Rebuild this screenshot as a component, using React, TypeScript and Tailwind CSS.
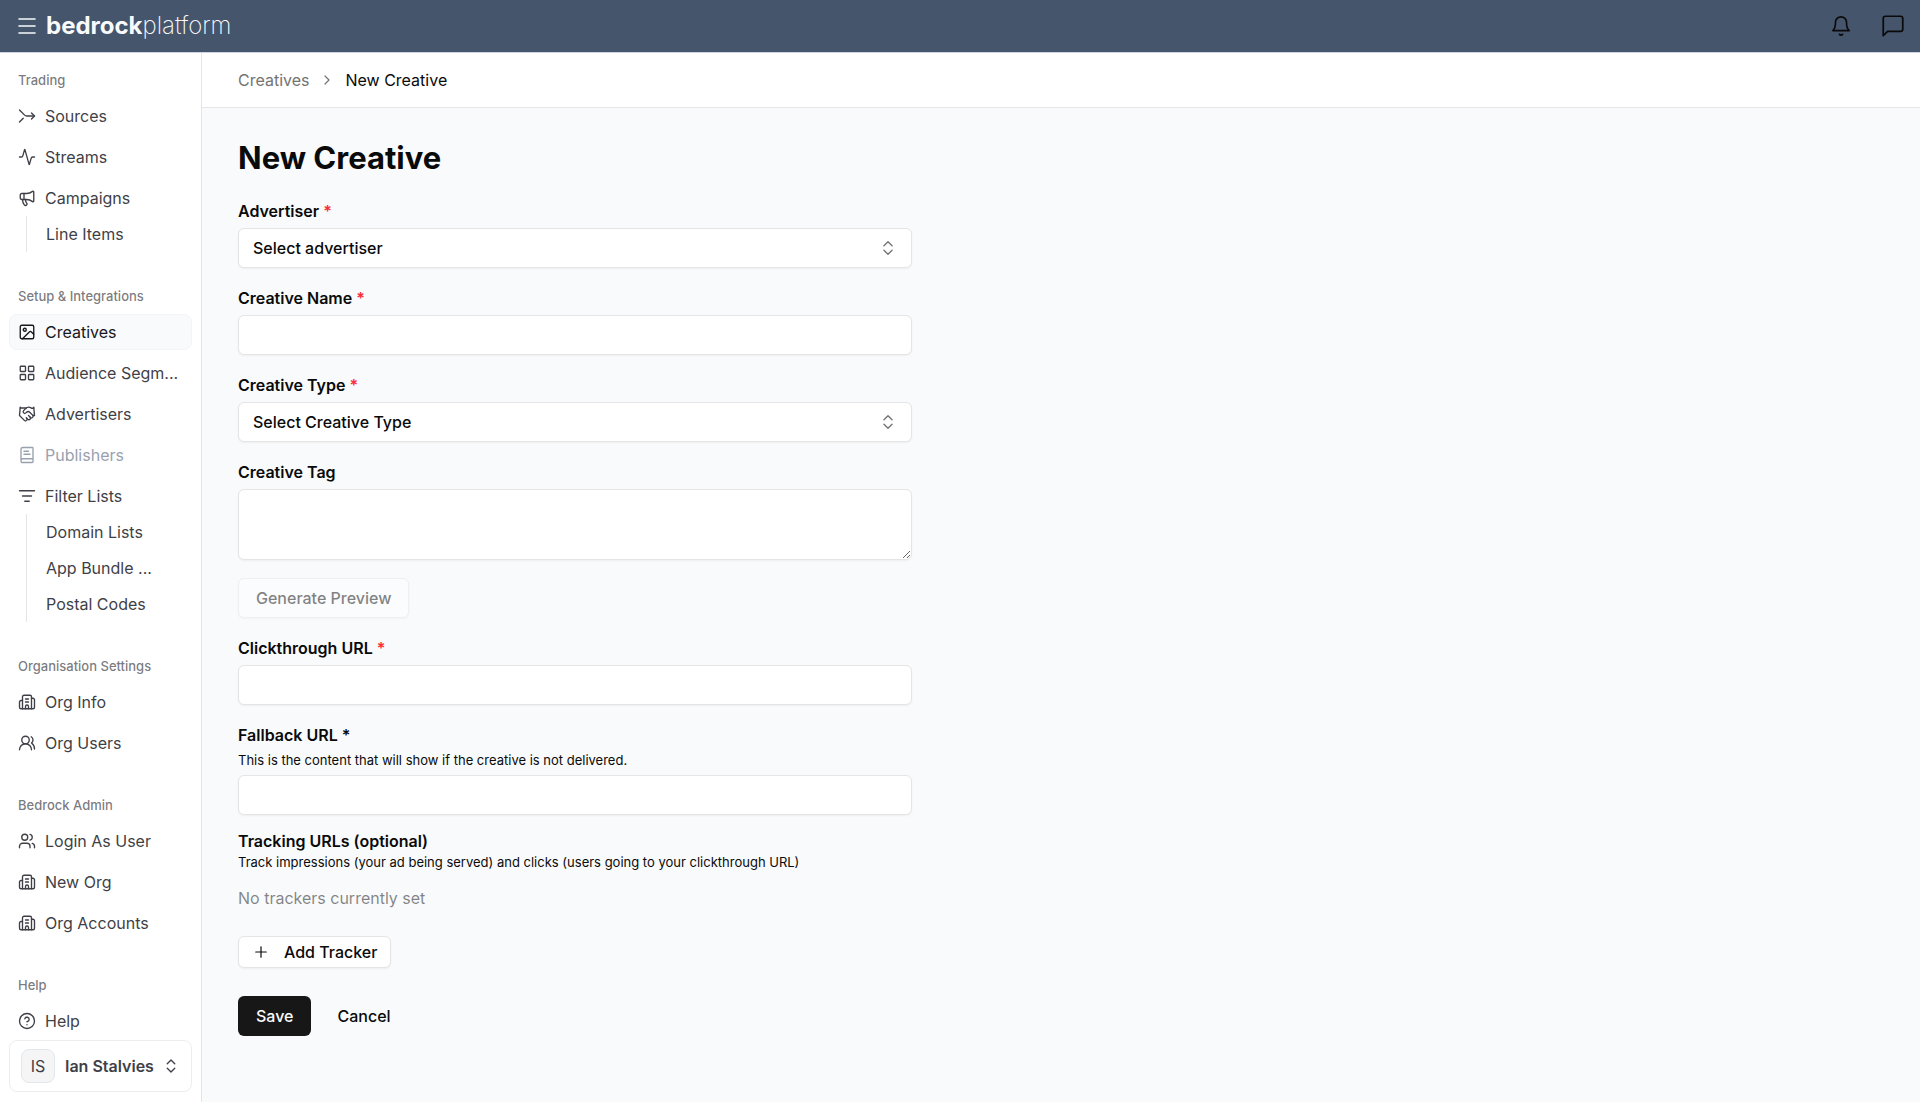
import type { ReactNode } from 'react';
import {
  Activity,
  BookText,
  Building2,
  ChevronRight,
  ChevronsUpDown,
  CircleQuestionMark,
  Handshake,
  Image,
  LayoutGrid,
  ListFilter,
  Megaphone,
  Menu,
  Merge,
  Plus,
  Users,
  UsersRound,
  type LucideIcon,
} from 'lucide-react';

type NavItem = {
  title: string;
  icon: LucideIcon;
  iconClass?: string;
  active?: boolean;
  disabled?: boolean;
  children?: string[];
};

const navGroups: { label: string; items: NavItem[] }[] = [
  {
    label: 'Trading',
    items: [
      { title: 'Sources', icon: Merge, iconClass: 'rotate-90' },
      { title: 'Streams', icon: Activity },
      { title: 'Campaigns', icon: Megaphone, children: ['Line Items'] },
    ],
  },
  {
    label: 'Setup & Integrations',
    items: [
      { title: 'Creatives', icon: Image, active: true },
      { title: 'Audience Segm...', icon: LayoutGrid },
      { title: 'Advertisers', icon: Handshake },
      { title: 'Publishers', icon: BookText, disabled: true },
      {
        title: 'Filter Lists',
        icon: ListFilter,
        children: ['Domain Lists', 'App Bundle ...', 'Postal Codes'],
      },
    ],
  },
  {
    label: 'Organisation Settings',
    items: [
      { title: 'Org Info', icon: Building2 },
      { title: 'Org Users', icon: UsersRound },
    ],
  },
  {
    label: 'Bedrock Admin',
    items: [
      { title: 'Login As User', icon: Users },
      { title: 'New Org', icon: Building2 },
      { title: 'Org Accounts', icon: Building2 },
    ],
  },
  {
    label: 'Help',
    items: [{ title: 'Help', icon: CircleQuestionMark }],
  },
];

function BellIcon() {
  return (
    <svg viewBox="0 0 24 24" className="size-[22px]" fill="none" stroke="currentColor" strokeWidth="1.8" strokeLinecap="round" strokeLinejoin="round">
      <path d="M6 8a6 6 0 0 1 12 0c0 7 3 9 3 9H3s3-2 3-9" />
      <path d="M10.3 21a1.94 1.94 0 0 0 3.4 0" />
    </svg>
  );
}

function MessageIcon() {
  return (
    <svg viewBox="0 0 24 24" className="size-[26px]" fill="none" stroke="currentColor" strokeWidth="1.6" strokeLinecap="round" strokeLinejoin="round">
      <path d="M21 15a2 2 0 0 1-2 2H7l-4 4V5a2 2 0 0 1 2-2h14a2 2 0 0 1 2 2z" />
    </svg>
  );
}

function SortIcon() {
  return (
    <svg viewBox="0 0 16 16" className="pointer-events-none absolute right-[15px] size-[18px] text-neutral-500" fill="none" stroke="currentColor" strokeWidth="1.2" strokeLinecap="round" strokeLinejoin="round">
      <path d="M4.4 6 8 2.4 11.6 6M4.4 10 8 13.6l3.6-3.6" />
    </svg>
  );
}

function Header() {
  return (
    <header className="flex h-[53px] shrink-0 items-center justify-between border-b border-slate-300 bg-slate-600 pr-[14px] pl-[15px]">
      <div className="flex items-center gap-[7px] text-slate-50">
        <button type="button" aria-label="Toggle sidebar">
          <Menu className="size-6" strokeWidth={1.6} />
        </button>
        <a href="#" className="text-[24px] leading-7">
          <span className="font-bold">bedrock</span>
          <span className="font-extralight">platform</span>
        </a>
      </div>
      <div className="flex items-center gap-7 text-neutral-950">
        <button type="button" aria-label="Notifications">
          <BellIcon />
        </button>
        <button type="button" aria-label="Messages">
          <MessageIcon />
        </button>
      </div>
    </header>
  );
}

function SidebarItem({ item }: { item: NavItem }) {
  const Icon = item.icon;
  let tone = 'border-transparent text-zinc-700';
  if (item.active) tone = 'border-slate-100 bg-slate-50 text-zinc-900';
  if (item.disabled) tone = 'border-transparent text-gray-400';

  return (
    <li>
      <a href="#" className={`flex h-9 items-center gap-[9px] rounded-lg border px-2 ${tone}`}>
        <Icon className={`size-[18px] shrink-0 ${item.iconClass ?? ''}`} strokeWidth={1.8} />
        <span className="whitespace-nowrap">{item.title}</span>
      </a>
      {item.children && (
        <ul className="ml-[17px] border-l border-neutral-200 pl-[19px]">
          {item.children.map((child) => (
            <li key={child}>
              <a href="#" className="block leading-9 whitespace-nowrap">
                {child}
              </a>
            </li>
          ))}
        </ul>
      )}
    </li>
  );
}

function Sidebar() {
  return (
    <aside className="flex w-[202px] shrink-0 flex-col border-r border-neutral-200 bg-white px-[9px] pt-[9px] pb-[10px] text-zinc-700">
      <nav className="flex min-h-0 flex-1 flex-col gap-[26px] overflow-hidden">
        {navGroups.map((group) => (
          <section key={group.label}>
            <h2 className="px-[9px] text-[13px] leading-9 font-medium text-zinc-700/70">{group.label}</h2>
            <ul className="flex flex-col gap-[5px]">
              {group.items.map((item) => (
                <SidebarItem key={item.title} item={item} />
              ))}
            </ul>
          </section>
        ))}
      </nav>
      <button type="button" className="flex h-[52px] shrink-0 items-center rounded-lg border border-neutral-200/70 px-[11px]">
        <span className="flex size-[34px] items-center justify-center rounded-lg border border-slate-200 bg-neutral-100">IS</span>
        <span className="ml-[10px] flex-1 text-left font-semibold">Ian Stalvies</span>
        <ChevronsUpDown className="size-[18px]" strokeWidth={1.8} />
      </button>
    </aside>
  );
}

const boxClass = 'w-full rounded-md border border-neutral-200 bg-white shadow-xs';

function Field({ id, label, required, hint, children }: { id: string; label: string; required?: boolean; hint?: string; children: ReactNode }) {
  return (
    <div className="flex flex-col gap-[7px]">
      <label htmlFor={id} className="leading-5 font-semibold">
        {label} {required && <span className="text-red-500">*</span>}
      </label>
      {hint && <p className="text-[13px] leading-4">{hint}</p>}
      {children}
    </div>
  );
}

function SelectBox({ id, placeholder }: { id: string; placeholder: string }) {
  return (
    <div className="relative flex items-center">
      <select id={id} className={`${boxClass} h-10 appearance-none px-[14px] font-medium`}>
        <option>{placeholder}</option>
      </select>
      <SortIcon />
    </div>
  );
}

function CreativeForm() {
  return (
    <form className="flex max-w-[674px] flex-col">
      <div className="flex flex-col gap-5">
        <Field id="advertiser" label="Advertiser" required>
          <SelectBox id="advertiser" placeholder="Select advertiser" />
        </Field>
        <Field id="name" label="Creative Name" required>
          <input id="name" type="text" className={`${boxClass} h-10 px-[14px]`} />
        </Field>
        <Field id="type" label="Creative Type" required>
          <SelectBox id="type" placeholder="Select Creative Type" />
        </Field>
        <div className="flex flex-col gap-[18px]">
          <Field id="tag" label="Creative Tag">
            <textarea id="tag" className={`${boxClass} block h-[71px] px-[14px] py-2`} />
          </Field>
          <button type="button" disabled className="h-10 self-start rounded-md border border-neutral-200 bg-white px-[17px] font-medium opacity-50 shadow-xs">
            Generate Preview
          </button>
        </div>
        <Field id="clickthrough" label="Clickthrough URL" required>
          <input id="clickthrough" type="url" className={`${boxClass} h-10 px-[14px]`} />
        </Field>
        <Field id="fallback" label="Fallback URL *" hint="This is the content that will show if the creative is not delivered.">
          <input id="fallback" type="url" className={`${boxClass} h-10 px-[14px]`} />
        </Field>
      </div>

      <h2 className="mt-4 leading-5 font-semibold">Tracking URLs (optional)</h2>
      <p className="mt-[3px] text-[13px] leading-4">
        Track impressions (your ad being served) and clicks (users going to your clickthrough URL)
      </p>
      <p className="mt-[18px] leading-5 text-neutral-950/50">No trackers currently set</p>

      <button type="button" className="mt-7 flex h-8 items-center gap-[14px] self-start rounded-md border border-neutral-200 bg-white px-[13px] font-medium shadow-xs">
        <Plus className="size-[18px]" strokeWidth={1.6} />
        Add Tracker
      </button>

      <div className="mt-7 flex gap-2">
        <button type="submit" className="h-10 rounded-md bg-neutral-900 px-[18px] font-medium text-neutral-50">
          Save
        </button>
        <button type="button" className="h-10 rounded-md px-[18px] font-medium">
          Cancel
        </button>
      </div>
    </form>
  );
}

export default function App() {
  return (
    <div className="flex h-screen flex-col bg-slate-50 font-['Inter',sans-serif] text-[16px] text-neutral-950">
      <Header />
      <div className="flex min-h-0 flex-1">
        <Sidebar />
        <div className="flex min-w-0 flex-1 flex-col">
          <nav aria-label="Breadcrumb" className="flex h-[55px] shrink-0 items-center gap-[10px] border-b border-gray-200 bg-white px-9">
            <a href="#" className="text-neutral-500">
              Creatives
            </a>
            <ChevronRight className="size-4 text-neutral-500" strokeWidth={1.8} />
            <span aria-current="page">New Creative</span>
          </nav>
          <main className="flex-1 overflow-auto px-9 pt-8">
            <h1 className="mb-[25px] text-[31px] leading-9 font-bold">New Creative</h1>
            <CreativeForm />
          </main>
        </div>
      </div>
    </div>
  );
}
